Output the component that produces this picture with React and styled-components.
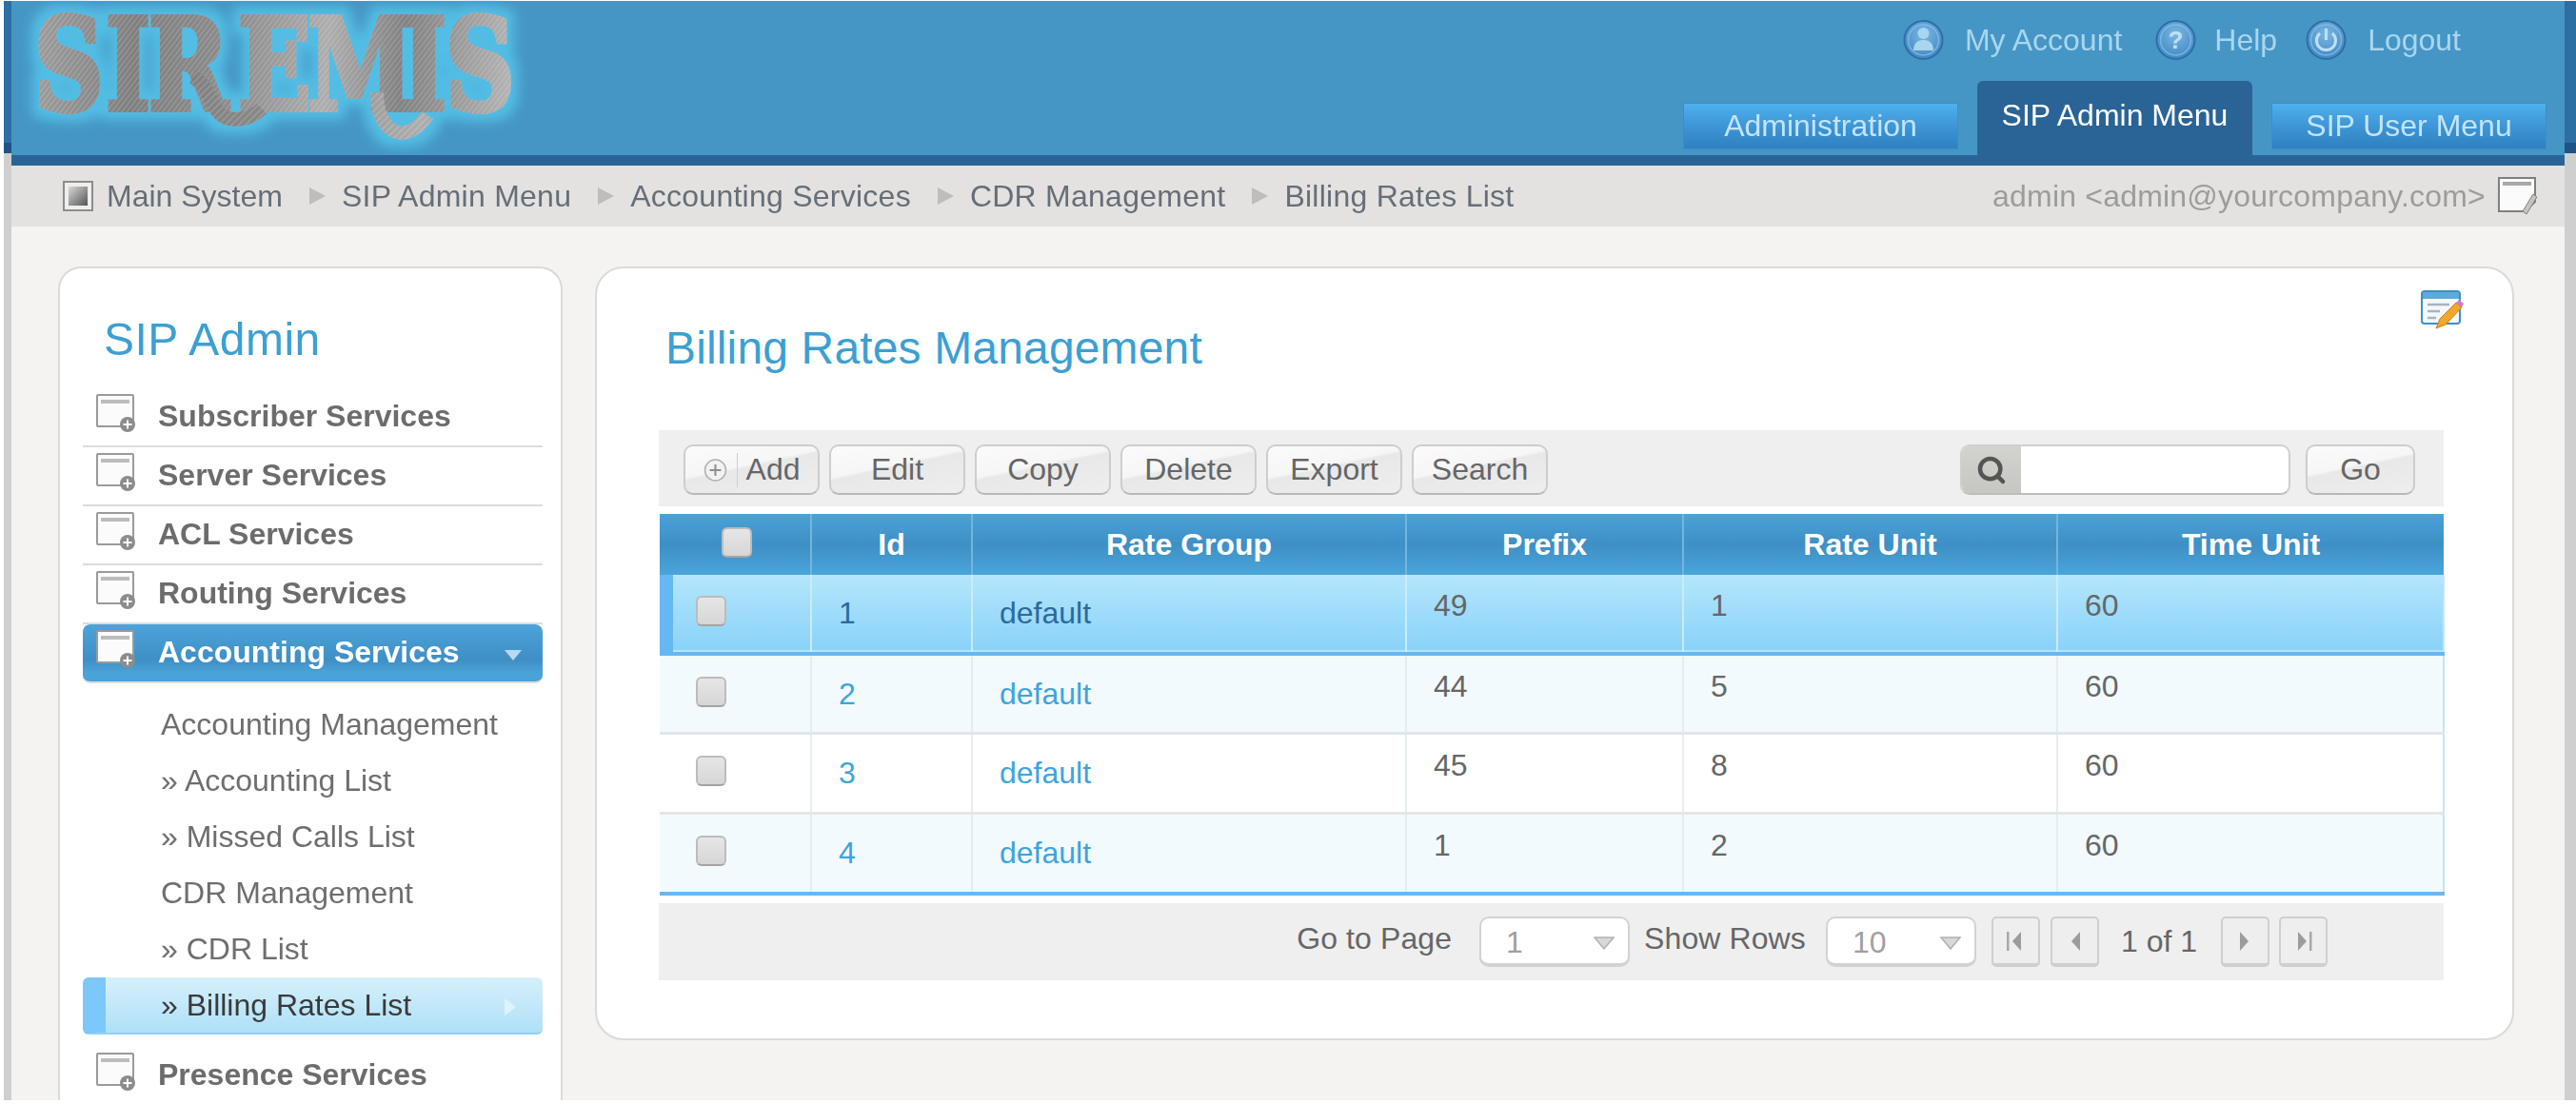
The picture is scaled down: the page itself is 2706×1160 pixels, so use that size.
import React from 'react'
import styled, { createGlobalStyle } from 'styled-components'
import { Search } from 'lucide-react'

const GlobalStyle = createGlobalStyle`
html, body {
  margin: 0;
  padding: 0;
  background: #fff;
}
body {
  font-family: "Liberation Sans", Arial, sans-serif;
  font-size: 32px;
  color: #666;
}
`

const Shell = styled.div`
width: 2706px;
height: 1160px;
box-sizing: border-box;
padding: 1px 0 4px 4px;
display: flex;
overflow: hidden;
filter: blur(0.6px);
`

const SideStrip = styled.div`
width: ${p => p.$width}px;
flex: none;
background: linear-gradient(to bottom, #2e6fa3 0, #2e6fa3 149px, #1f5285 149px, #1f5285 160px, #cfcfcf 160px);
`

const Column = styled.div`
flex: 1;
min-width: 0;
display: flex;
flex-direction: column;
`

const Header = styled.header`
height: 162px;
flex: none;
display: flex;
justify-content: space-between;
background: #4596c5;
`

const LogoBox = styled.svg`
width: 560px;
height: 162px;
flex: none;
overflow: visible;
`

const HeaderRight = styled.div`
display: flex;
flex-direction: column;
align-items: flex-end;
justify-content: space-between;
padding: 21px 19px 0 0;
`

const UserLinks = styled.nav`
display: flex;
align-items: center;
margin-right: 90px;
`

const UserLink = styled.a`
display: flex;
align-items: center;
gap: ${p => p.$gap || 21}px;
margin-right: ${p => p.$after || 0}px;
color: #a9d6ef;
line-height: 44px;
transform: translateY(-2px);
`

const Tabs = styled.nav`
display: flex;
align-items: flex-end;
gap: 20px;
`

const Tab = styled.a`
box-sizing: border-box;
width: 289px;
text-align: center;
${p => p.$active ? `
  height: 78px;
  padding-top: 18px;
  color: #fff;
  background: #2a6496;
  border-radius: 6px 6px 0 0;
` : `
  height: 49px;
  margin-bottom: 6px;
  line-height: 47px;
  color: #c2e4f8;
  background: linear-gradient(to bottom, #4fb0ee 0, #3f98d8 45%, #2f80bf 100%);
  border: 1px solid #3d8ec6;
`}
`

const DarkBand = styled.div`
height: 11px;
flex: none;
background: #2a6496;
`

const Crumbs = styled.div`
height: 64px;
flex: none;
box-sizing: border-box;
padding: 0 29px 0 54px;
display: flex;
align-items: center;
background: #e3e2e0;
`

const CrumbIcon = styled.svg`
width: 32px;
height: 32px;
margin-right: 14px;
flex: none;
`

const CrumbText = styled.span`
color: #666e78;
letter-spacing: ${p => p.$wide ? '0.25px' : '0'};
`

const CrumbArrow = styled.span`
width: 0;
height: 0;
margin: 0 17px 0 28px;
border-left: 17px solid #bdbdbd;
border-top: 9px solid transparent;
border-bottom: 9px solid transparent;
`

const CrumbUser = styled.div`
margin-left: auto;
display: flex;
align-items: center;
gap: 13px;
color: #9c9c9c;
letter-spacing: 0.2px;
`

const Main = styled.main`
flex: 1;
min-height: 0;
box-sizing: border-box;
padding: 42px 53px 0 49px;
display: flex;
align-items: flex-start;
gap: 34px;
background: #f4f3f1;
`

const Sidebar = styled.aside`
width: 530px;
height: 876px;
flex: none;
box-sizing: border-box;
padding: 47px 19px 0 24px;
overflow: hidden;
background: #fff;
border: 2px solid #dadada;
border-bottom: 0;
border-radius: 24px 24px 0 0;
`

const SideTitle = styled.h2`
margin: 0 0 23px 22px;
font-size: 48px;
font-weight: 400;
line-height: 56px;
letter-spacing: 0.5px;
color: #3d9fd2;
`

const MenuRow = styled.div`
height: 62px;
box-sizing: border-box;
padding: 6px 14px 0;
display: flex;
align-items: flex-start;
gap: 22px;
font-weight: 700;
color: ${p => p.$active ? '#fff' : '#6c6c6c'};
border-bottom: 2px solid #ddd;
border-radius: ${p => p.$active ? '8px' : '0'};
background: ${p => p.$active ? 'linear-gradient(to bottom, #4ba4d9 0, #3f8fc5 62%, #4aa3d8 85%, #4aa3d8 100%)' : 'transparent'};
${p => p.$last ? 'border-bottom: 0;' : ''}
`

const MenuLabel = styled.span`
line-height: 37px;
margin-top: 5px;
`

const MenuCaret = styled.span`
margin: 21px 8px 0 auto;
width: 0;
height: 0;
border-top: 11px solid #b8daf0;
border-left: 9px solid transparent;
border-right: 9px solid transparent;
`

const SubMenu = styled.div`
padding: 14px 0 13px;
`

const SubItem = styled.div`
height: 59px;
box-sizing: border-box;
padding-left: 82px;
display: flex;
align-items: center;
color: #6e6e6e;
${p => p.$active && `
  height: 60px;
  color: #3a3a3a;
  border-radius: 6px;
  border-bottom: 2px solid #8dd2f8;
  border-left: 24px solid #7cc8fa;
  padding-left: 58px;
  background: linear-gradient(to bottom, #d6f0fb, #aee0f8);
`}
`

const SubCaret = styled.span`
margin: 4px 28px 0 auto;
width: 0;
height: 0;
border-left: 12px solid #dff3fc;
border-top: 9px solid transparent;
border-bottom: 9px solid transparent;
`

const Panel = styled.section`
flex: 1;
min-width: 0;
height: 813px;
box-sizing: border-box;
padding: 23px 72px 0 65px;
background: #fff;
border: 2px solid #dadada;
border-radius: 30px;
`

const TitleRow = styled.div`
display: flex;
justify-content: space-between;
align-items: flex-start;
margin-bottom: 58px;
`

const PageTitle = styled.h1`
margin: 33px 0 0 7px;
font-size: 48px;
font-weight: 400;
line-height: 56px;
letter-spacing: 0.15px;
color: #3d9fd2;
`

const EditIcon = styled.svg`
width: 45px;
height: 42px;
margin-right: -21px;
flex: none;
`

const Toolbar = styled.div`
height: 80px;
box-sizing: border-box;
padding: 3px 30px 0 26px;
display: flex;
align-items: center;
gap: 10px;
background: #efefef;
`

const Button = styled.button`
width: ${p => p.$width || 143}px;
height: 53px;
padding: 0;
flex: none;
display: flex;
align-items: center;
justify-content: center;
font: inherit;
color: #666;
background: linear-gradient(168deg, #fbfbfb 0, #f6f6f6 42%, #e8e8e8 46%, #eeeeee 100%);
border: 2px solid #cdcdcd;
border-bottom-color: #b8b8b8;
border-radius: 10px;
`

const AddDivider = styled.span`
width: 1px;
height: 36px;
margin: 0 9px 0 10px;
background: #d0d0d0;
`

const SearchGroup = styled.div`
margin-left: auto;
display: flex;
align-items: center;
gap: 16px;
`

const SearchBox = styled.div`
width: 347px;
height: 53px;
box-sizing: border-box;
display: flex;
overflow: hidden;
background: #fff;
border: 2px solid #cfcfcf;
border-bottom-color: #bcbcbc;
border-radius: 10px;
`

const SearchAddon = styled.span`
width: 62px;
flex: none;
display: flex;
align-items: center;
justify-content: center;
color: #555;
background: linear-gradient(to bottom, #d2d2cf, #c6c6c3);
`

const Grid = styled.table`
width: 1874px;
margin: 8px 0 0 1px;
border-collapse: collapse;
table-layout: fixed;
`

const HeadCell = styled.th`
height: 64px;
box-sizing: border-box;
padding: 0;
font-size: 32px;
font-weight: 700;
color: #fff;
text-align: center;
background: linear-gradient(to bottom, #4aa3d8 0, #3e8fc5 50%, #4aa5da 100%);
border-left: 2px solid #74b5dd;
&:first-child { border-left: 0; }
`

const HeadCheck = styled.span`
display: inline-block;
vertical-align: middle;
margin: 0 0 6px 4px;
`

const Box = styled.span`
display: block;
width: 32px;
height: 32px;
box-sizing: border-box;
background: linear-gradient(to bottom, #e6e6e6, #d6d6d6);
border: 2px solid #bcbcbc;
border-bottom-color: #a4a4a4;
border-radius: 6px;
`

const Row = styled.tr`
height: ${p => p.$height}px;
background: ${p => p.$active ? 'linear-gradient(to bottom, #b4e6fc, #8ad2f9)' : p.$tint ? '#f2fafd' : '#fff'};
border-bottom: ${p => p.$edge ? '4px solid #66b8f5' : '3px solid #e2e6e8'};
border-right: 2px solid #c6e3f8;
`

const Cell = styled.td`
box-sizing: border-box;
vertical-align: top;
padding: ${p => p.$low ? 22 : 14}px 0 0 28px;
line-height: 37px;
color: ${p => p.$link ? (p.$active ? '#2a6a9e' : '#3ca5dc') : '#666'};
border-left: 2px solid ${p => p.$active ? '#c9ebfc' : '#e6edf0'};
&:first-child {
  border-left: 0;
  padding: 22px 0 0 38px;
  ${p => p.$active ? 'box-shadow: inset 14px 0 0 #66b8f5;' : ''}
}
`

const Pager = styled.div`
height: 81px;
margin-top: 8px;
box-sizing: border-box;
padding-right: 122px;
display: flex;
align-items: center;
justify-content: flex-end;
background: #efefef;
`

const PagerLabel = styled.span`
margin: 0 ${p => p.$right}px 6px 0;
color: #666;
letter-spacing: 0.1px;
`

const Select = styled.div`
width: 158px;
height: 53px;
box-sizing: border-box;
padding: 4px 14px 0 26px;
margin-right: ${p => p.$right}px;
display: flex;
align-items: center;
justify-content: space-between;
color: #a0a0a0;
background: #fff;
border: 2px solid #d2d2d2;
border-bottom-width: 4px;
border-radius: 10px;
`

const PageButton = styled.span`
width: 51px;
height: 53px;
box-sizing: border-box;
margin-right: ${p => p.$right || 0}px;
display: flex;
align-items: center;
justify-content: center;
background: #eee;
border: 2px solid #cfcfcf;
border-bottom-width: 4px;
border-radius: 5px;
`

const PageCount = styled.span`
margin: 0 25px 0 23px;
color: #666;
`

// letter starts measured off the reference, the word is squeezed by logoScale
const logoScale = 0.757
const logoX = [24, 99, 144, 238, 311, 410, 456].map(v => (v / logoScale).toFixed(1)).join(' ')

function Logo() {
  return (
    <LogoBox viewBox="0 0 560 162">
      <defs>
        <linearGradient id="bands" gradientUnits="userSpaceOnUse" x1="20" y1="0" x2="720" y2="60">
          <stop offset="0" stopColor="#a0a0a0" />
          <stop offset="0.22" stopColor="#7e7e7e" />
          <stop offset="0.42" stopColor="#8c8c8c" />
          <stop offset="0.6" stopColor="#adadad" />
          <stop offset="0.75" stopColor="#808080" />
          <stop offset="1" stopColor="#bbbbbb" />
        </linearGradient>
        <pattern id="brush" width="5" height="5" patternUnits="userSpaceOnUse" patternTransform="rotate(-45)">
          <rect width="5" height="1.4" fill="#ffffff" fillOpacity="0.2" />
        </pattern>
        <pattern id="metal" width="800" height="162" patternUnits="userSpaceOnUse">
          <rect width="800" height="162" fill="url(#bands)" />
          <rect width="800" height="162" fill="url(#brush)" />
        </pattern>
        <filter id="glow" x="-10%" y="-20%" width="120%" height="140%">
          <feMorphology operator="dilate" radius="8" in="SourceAlpha" result="fat" />
          <feGaussianBlur in="fat" stdDeviation="6" result="soft" />
          <feFlood floodColor="#52bde3" />
          <feComposite in2="soft" operator="in" />
          <feMerge>
            <feMergeNode />
            <feMergeNode in="SourceGraphic" />
          </feMerge>
        </filter>
      </defs>
      <g filter="url(#glow)">
        <g transform={`scale(${logoScale} 1)`}>
          <text x={logoX} y="114" fontFamily="'DejaVu Serif', serif" fontWeight="700" fontSize="133" fill="url(#metal)" stroke="url(#metal)" strokeWidth="6">SIREMIS</text>
        </g>
        <path d="M190 80 C215 90 205 128 240 124 C252 123 258 118 263 113" fill="none" stroke="url(#metal)" strokeWidth="15" />
        <path d="M384 96 C384 128 400 142 415 138 C425 135 432 128 437 120" fill="none" stroke="url(#metal)" strokeWidth="14" />
      </g>
    </LogoBox>
  )
}

function OrbIcon({ kind }) {
  return (
    <svg width="45" height="44" viewBox="0 0 45 44">
      <defs>
        <radialGradient id={`orb-${kind}`} cx="0.5" cy="0.35" r="0.7">
          <stop offset="0" stopColor="#7ab8e4" />
          <stop offset="1" stopColor="#3c83c0" />
        </radialGradient>
      </defs>
      <circle cx="22.5" cy="22" r="20" fill={`url(#orb-${kind})`} stroke="#2f6ea8" strokeWidth="2" />
      <circle cx="22.5" cy="22" r="16" fill="none" stroke="#8cc4ea" strokeWidth="1.5" opacity="0.7" />
      {kind === 'user' && (
        <>
          <circle cx="22.5" cy="15" r="6" fill="#a8d6ee" />
          <path d="M12 33 C12 24 18 22 22.5 22 C27 22 33 24 33 33 Z" fill="#a8d6ee" />
        </>
      )}
      {kind === 'help' && (
        <text x="22.5" y="31" textAnchor="middle" fontFamily="'Liberation Sans', sans-serif" fontWeight="700" fontSize="26" fill="#bfe0f4">?</text>
      )}
      {kind === 'power' && (
        <>
          <path d="M16 15 A10 10 0 1 0 29 15" fill="none" stroke="#bfe0f4" strokeWidth="3" />
          <path d="M22.5 10 V22" stroke="#bfe0f4" strokeWidth="3" />
        </>
      )}
    </svg>
  )
}

function MenuIcon() {
  return (
    <svg width="43" height="40" viewBox="0 0 43 40" style={{ flex: 'none' }}>
      <rect x="1" y="1" width="38" height="33" rx="1" fill="#fbfbfb" stroke="#9a9a9a" strokeWidth="2" />
      <rect x="5" y="6" width="30" height="4" fill="#bcbcbc" />
      <circle cx="33" cy="32" r="8" fill="#8c8c8c" />
      <path d="M33 27.5 V36.5 M28.5 32 H37.5" stroke="#fff" strokeWidth="2" />
    </svg>
  )
}

function NoteIcon() {
  return (
    <svg width="41" height="40" viewBox="0 0 41 40">
      <path d="M1 1 H39 V26 L28 36 H1 Z" fill="#fbfbfb" stroke="#7f7f7f" strokeWidth="2" />
      <rect x="5" y="5" width="30" height="4" fill="#a8a8a8" />
      <path d="M26 36 L37 18 L41 21 L30 39 Z" fill="#c4c4c4" stroke="#7f7f7f" strokeWidth="1" />
    </svg>
  )
}

function Triangle() {
  return (
    <svg width="22" height="14" viewBox="0 0 22 14">
      <path d="M1 1 H21 L11 13 Z" fill="#d8d8d8" stroke="#b0b0b0" strokeWidth="1.5" />
    </svg>
  )
}

function PageGlyph({ dir, bar }) {
  const left = dir === 'left'
  return (
    <svg width="24" height="26" viewBox="0 0 24 26">
      <path d={left ? 'M18 3 L9 13 L18 23 Z' : 'M6 3 L15 13 L6 23 Z'} fill="#9c9c9c" />
      {bar && <rect x={left ? 3 : 18} y="3" width="2.5" height="20" fill="#a8a8a8" />}
    </svg>
  )
}

const crumbs = ['SIP Admin Menu', 'Accounting Services', 'CDR Management', 'Billing Rates List']
const topMenu = ['Subscriber Services', 'Server Services', 'ACL Services', 'Routing Services']
const subMenu = ['Accounting Management', '» Accounting List', '» Missed Calls List', 'CDR Management', '» CDR List']
const columns = [
  { title: '', width: 159 },
  { title: 'Id', width: 169 },
  { title: 'Rate Group', width: 456 },
  { title: 'Prefix', width: 291 },
  { title: 'Rate Unit', width: 393 },
  { title: 'Time Unit', width: 406 },
]
const rates = [
  { id: 1, group: 'default', prefix: 49, rate: 1, time: 60, height: 83 },
  { id: 2, group: 'default', prefix: 44, rate: 5, time: 60, height: 83 },
  { id: 3, group: 'default', prefix: 45, rate: 8, time: 60, height: 84 },
  { id: 4, group: 'default', prefix: 1, rate: 2, time: 60, height: 85 },
]

export default function App() {
  return (
    <>
      <GlobalStyle />
      <Shell>
        <SideStrip $width={8} />
        <Column>
          <Header>
            <Logo />
            <HeaderRight>
              <UserLinks>
                <UserLink $after={34}><OrbIcon kind="user" />My Account</UserLink>
                <UserLink $gap={18} $after={29}><OrbIcon kind="help" />Help</UserLink>
                <UserLink><OrbIcon kind="power" />Logout</UserLink>
              </UserLinks>
              <Tabs>
                <Tab>Administration</Tab>
                <Tab $active>SIP Admin Menu</Tab>
                <Tab>SIP User Menu</Tab>
              </Tabs>
            </HeaderRight>
          </Header>
          <DarkBand />
          <Crumbs>
            <CrumbIcon viewBox="0 0 32 32">
              <defs>
                <linearGradient id="crumbFill" x1="0" y1="0" x2="1" y2="1">
                  <stop offset="0" stopColor="#d8d8d8" />
                  <stop offset="1" stopColor="#555" />
                </linearGradient>
              </defs>
              <rect x="1" y="1" width="30" height="30" fill="#eee" stroke="#8c8c8c" strokeWidth="2" />
              <rect x="6" y="6" width="20" height="20" fill="url(#crumbFill)" />
            </CrumbIcon>
            <CrumbText>Main System</CrumbText>
            {crumbs.map(c => (
              <React.Fragment key={c}>
                <CrumbArrow />
                <CrumbText $wide>{c}</CrumbText>
              </React.Fragment>
            ))}
            <CrumbUser>
              admin &lt;admin@yourcompany.com&gt;
              <NoteIcon />
            </CrumbUser>
          </Crumbs>
          <Main>
            <Sidebar>
              <SideTitle>SIP Admin</SideTitle>
              {topMenu.map(m => (
                <MenuRow key={m}><MenuIcon /><MenuLabel>{m}</MenuLabel></MenuRow>
              ))}
              <MenuRow $active>
                <MenuIcon />
                <MenuLabel>Accounting Services</MenuLabel>
                <MenuCaret />
              </MenuRow>
              <SubMenu>
                {subMenu.map(s => <SubItem key={s}>{s}</SubItem>)}
                <SubItem $active>» Billing Rates List<SubCaret /></SubItem>
              </SubMenu>
              <MenuRow $last><MenuIcon /><MenuLabel>Presence Services</MenuLabel></MenuRow>
            </Sidebar>
            <Panel>
              <TitleRow>
                <PageTitle>Billing Rates Management</PageTitle>
                <EditIcon viewBox="0 0 45 42">
                  <rect x="1" y="1" width="40" height="34" rx="3" fill="#f4f8fb" stroke="#3f8fc5" strokeWidth="2" />
                  <rect x="2" y="2" width="38" height="7" fill="#5da9dc" />
                  <path d="M7 15 H30 M7 22 H20 M7 29 H16" stroke="#a8b4bc" strokeWidth="2.5" />
                  <path d="M16 40 L20 30 L37 13 L43 18 L26 36 Z" fill="#f0a72c" stroke="#c9801a" strokeWidth="1" />
                  <path d="M37 13 L43 18 L45 14 L40 10 Z" fill="#d67ac0" />
                </EditIcon>
              </TitleRow>
              <Toolbar>
                <Button>
                  <svg width="25" height="30" viewBox="0 0 25 30">
                    <circle cx="12.5" cy="15" r="11" fill="#f2f2f2" stroke="#b0b0b0" strokeWidth="1.5" />
                    <path d="M12.5 9 V21 M6.5 15 H18.5" stroke="#8e8e8e" strokeWidth="2" />
                  </svg>
                  <AddDivider />
                  Add
                </Button>
                <Button>Edit</Button>
                <Button>Copy</Button>
                <Button>Delete</Button>
                <Button>Export</Button>
                <Button>Search</Button>
                <SearchGroup>
                  <SearchBox>
                    <SearchAddon><Search size={32} strokeWidth={3.4} /></SearchAddon>
                  </SearchBox>
                  <Button $width={115}>Go</Button>
                </SearchGroup>
              </Toolbar>
              <Grid>
                <colgroup>
                  {columns.map(c => <col key={c.title} width={c.width} />)}
                </colgroup>
                <thead>
                  <tr>
                    {columns.map(c => (
                      <HeadCell key={c.title}>
                        {c.title || <HeadCheck><Box /></HeadCheck>}
                      </HeadCell>
                    ))}
                  </tr>
                </thead>
                <tbody>
                  {rates.map((r, key) => {
                    const active = key === 0
                    return (
                      <Row key={r.id} $height={r.height} $active={active} $tint={key % 2 === 1} $edge={active || key === 3}>
                        <Cell $active={active}><Box /></Cell>
                        <Cell $active={active} $low $link>{r.id}</Cell>
                        <Cell $active={active} $low $link>{r.group}</Cell>
                        <Cell $active={active}>{r.prefix}</Cell>
                        <Cell $active={active}>{r.rate}</Cell>
                        <Cell $active={active}>{r.time}</Cell>
                      </Row>
                    )
                  })}
                </tbody>
              </Grid>
              <Pager>
                <PagerLabel $right={29}>Go to Page</PagerLabel>
                <Select $right={15}>1<Triangle /></Select>
                <PagerLabel $right={21}>Show Rows</PagerLabel>
                <Select $right={16}>10<Triangle /></Select>
                <PageButton $right={11}><PageGlyph dir="left" bar /></PageButton>
                <PageButton><PageGlyph dir="left" /></PageButton>
                <PageCount>1 of 1</PageCount>
                <PageButton $right={10}><PageGlyph dir="right" /></PageButton>
                <PageButton><PageGlyph dir="right" bar /></PageButton>
              </Pager>
            </Panel>
          </Main>
        </Column>
        <SideStrip $width={12} />
      </Shell>
    </>
  )
}
